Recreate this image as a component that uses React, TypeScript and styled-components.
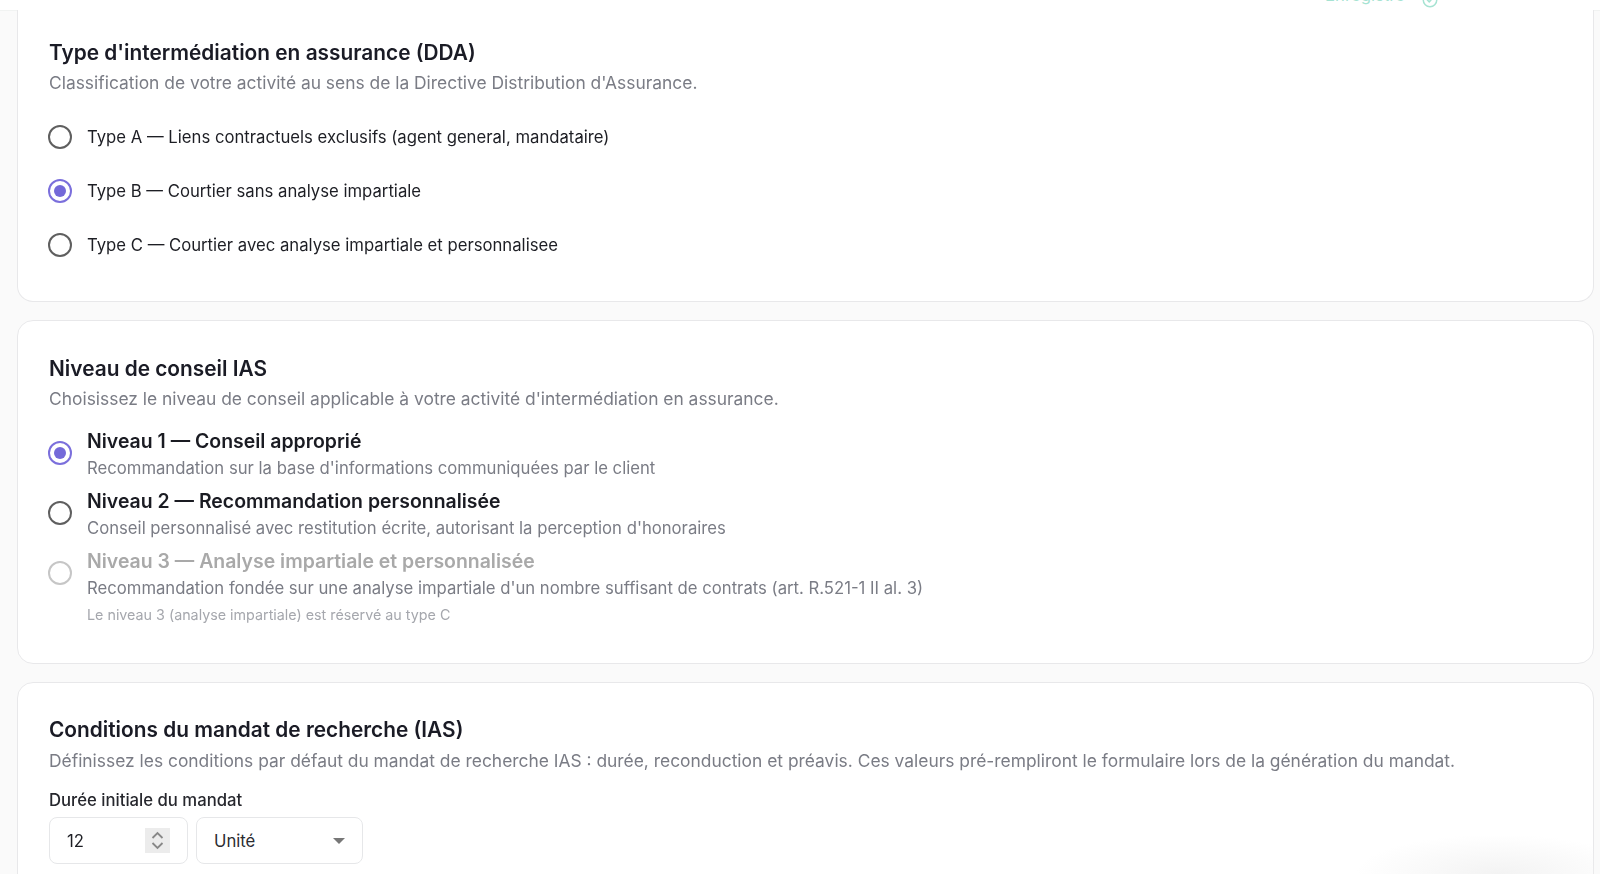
import React from "react";
import styled, { createGlobalStyle } from "styled-components";

const Global = createGlobalStyle`
  html, body { margin: 0; padding: 0; height: 874px; overflow: hidden; background: #fafafa; }
  body { font-family: Inter, "Liberation Sans", sans-serif; color: #1a1a22; -webkit-font-smoothing: antialiased; }
  * { box-sizing: border-box; }
`;

const Page = styled.div`
  position: relative;
  width: 1600px;
  height: 874px;
  overflow: hidden;
  filter: blur(0.3px);
`;

const TopBar = styled.header`
  height: 11px;
  background: #fff;
  border-bottom: 1px solid #f1f3f2;
  display: flex;
  justify-content: flex-end;
  align-items: flex-end;
  gap: 16px;
  padding-right: 161px;
  overflow: hidden;
`;

const Saved = styled.span`
  font-size: 16.7px;
  line-height: 20px;
  color: #a6e3d2;
  margin-bottom: 5px;
  flex: none;
`;

const SavedIcon = styled.svg`
  width: 18px;
  height: 18px;
  margin-bottom: 1px;
  flex: none;
`;

const Stack = styled.main`
  display: flex;
  flex-direction: column;
  gap: 18px;
  padding: 0 6px 0 17px;
  margin-top: -1px;
`;

const Card = styled.section<{ $height: number }>`
  background: #fff;
  border: 1px solid #e8e8ea;
  border-radius: 16px;
  padding: 0 30px 0 31px;
  height: ${(p) => p.$height}px;
  flex: none;
`;

const FirstCard = styled(Card)`
  border-top: none;
  border-top-left-radius: 0;
  border-top-right-radius: 0;
`;

const Title = styled.h2<{ $top: number }>`
  margin: ${(p) => p.$top}px 0 0;
  font-size: 20.85px;
  line-height: 28px;
  font-weight: 600;
  color: #1a1b25;
`;

const Subtitle = styled.p<{ $gap: number }>`
  margin: ${(p) => p.$gap}px 0 0;
  font-size: 17.4px;
  line-height: 26px;
  color: #7a7c85;
`;

const TypeList = styled.div`
  display: flex;
  flex-direction: column;
  gap: 30px;
  margin: 29px 0 0 -1px;
`;

const TypeRow = styled.label`
  display: flex;
  align-items: center;
  gap: 15px;
  height: 24px;
  font-size: 16.7px;
  line-height: 24px;
  color: #1d1e24;
`;

const Radio = styled.span<{ $state?: "on" | "off" | "disabled" }>`
  width: 24px;
  height: 24px;
  flex: none;
  border-radius: 50%;
  display: flex;
  align-items: center;
  justify-content: center;
  background: #fff;
  border: 2px solid
    ${(p) => (p.$state === "on" ? "#7b6fdc" : p.$state === "disabled" ? "#c6c6c6" : "#5f5f5f")};
  &::after {
    content: "";
    width: 12px;
    height: 12px;
    border-radius: 50%;
    background: ${(p) => (p.$state === "on" ? "#7469d9" : "transparent")};
  }
`;

const LevelList = styled.div`
  display: flex;
  flex-direction: column;
  gap: 5px;
  margin: 13px 0 0 -1px;
`;

const LevelRow = styled.label`
  display: flex;
  align-items: center;
  gap: 15px;
`;

const LevelText = styled.div`
  display: flex;
  flex-direction: column;
`;

const LevelTitle = styled.span<{ $disabled?: boolean }>`
  font-size: 19.45px;
  line-height: 32px;
  font-weight: 600;
  color: ${(p) => (p.$disabled ? "#a9a9a9" : "#1a1b22")};
`;

const LevelDesc = styled.span`
  font-size: 16.7px;
  line-height: 23px;
  color: #7a7c85;
`;

const Note = styled.p`
  margin: 5px 0 0 38px;
  font-size: 14.3px;
  line-height: 20px;
  color: #a5a7ad;
`;

const FieldLabel = styled.div`
  margin-top: 14px;
  font-size: 16.7px;
  line-height: 24px;
  font-weight: 500;
  color: #26272d;
`;

const FieldRow = styled.div`
  display: flex;
  gap: 8px;
  margin-top: 5px;
`;

const NumberBox = styled.div`
  width: 139px;
  height: 47px;
  border: 1px solid #e6e7e9;
  border-radius: 8px;
  background: #fff;
  display: flex;
  align-items: center;
  justify-content: space-between;
  padding: 0 17px;
  font-size: 16.7px;
  color: #1d1e24;
`;

const Spinner = styled.svg`
  width: 25px;
  height: 25px;
  flex: none;
`;

const SelectBox = styled.div`
  width: 167px;
  height: 47px;
  border: 1px solid #e6e7e9;
  border-radius: 8px;
  background: #fff;
  display: flex;
  align-items: center;
  justify-content: space-between;
  padding: 0 17px;
  font-size: 16.7px;
  color: #2a2b30;
`;

const Caret = styled.svg`
  width: 12px;
  height: 6px;
  flex: none;
`;

const CornerFade = styled.div`
  position: absolute;
  right: 6px;
  bottom: 0;
  width: 240px;
  height: 40px;
  pointer-events: none;
  background: radial-gradient(ellipse at 60% 100%, rgba(240, 240, 240, 0.8), rgba(255, 255, 255, 0) 70%);
`;

const types = [
  { text: "Type A — Liens contractuels exclusifs (agent general, mandataire)", on: false },
  { text: "Type B — Courtier sans analyse impartiale", on: true },
  { text: "Type C — Courtier avec analyse impartiale et personnalisee", on: false },
];

const levels: { title: string; desc: string; state: "on" | "off" | "disabled" }[] = [
  { title: "Niveau 1 — Conseil approprié", desc: "Recommandation sur la base d'informations communiquées par le client", state: "on" },
  { title: "Niveau 2 — Recommandation personnalisée", desc: "Conseil personnalisé avec restitution écrite, autorisant la perception d'honoraires", state: "off" },
  { title: "Niveau 3 — Analyse impartiale et personnalisée", desc: "Recommandation fondée sur une analyse impartiale d'un nombre suffisant de contrats (art. R.521-1 II al. 3)", state: "disabled" },
];

export default function App() {
  return (
    <Page>
      <Global />
      <TopBar>
        <Saved>Enregistré</Saved>
        <SavedIcon viewBox="0 0 24 24" fill="none" stroke="#a6e3d2" strokeWidth="2" strokeLinecap="round" strokeLinejoin="round">
          <circle cx="12" cy="12" r="9" />
          <path d="m8.5 12 2.5 2.5 4.5-5" />
        </SavedIcon>
      </TopBar>
      <Stack>
        <FirstCard $height={292}>
          <Title $top={29}>Type d'intermédiation en assurance (DDA)</Title>
          <Subtitle $gap={3}>Classification de votre activité au sens de la Directive Distribution d'Assurance.</Subtitle>
          <TypeList>
            {types.map((t) => (
              <TypeRow key={t.text}>
                <Radio $state={t.on ? "on" : "off"} />
                {t.text}
              </TypeRow>
            ))}
          </TypeList>
        </FirstCard>
        <Card $height={344}>
          <Title $top={34}>Niveau de conseil IAS</Title>
          <Subtitle $gap={3}>Choisissez le niveau de conseil applicable à votre activité d'intermédiation en assurance.</Subtitle>
          <LevelList>
            {levels.map((l) => (
              <LevelRow key={l.title}>
                <Radio $state={l.state} />
                <LevelText>
                  <LevelTitle $disabled={l.state === "disabled"}>{l.title}</LevelTitle>
                  <LevelDesc>{l.desc}</LevelDesc>
                </LevelText>
              </LevelRow>
            ))}
          </LevelList>
          <Note>Le niveau 3 (analyse impartiale) est réservé au type C</Note>
        </Card>
        <Card $height={260}>
          <Title $top={33}>Conditions du mandat de recherche (IAS)</Title>
          <Subtitle $gap={4}>Définissez les conditions par défaut du mandat de recherche IAS : durée, reconduction et préavis. Ces valeurs pré-rempliront le formulaire lors de la génération du mandat.</Subtitle>
          <FieldLabel>Durée initiale du mandat</FieldLabel>
          <FieldRow>
            <NumberBox>
              12
              <Spinner viewBox="0 0 25 25" fill="none">
                <rect width="25" height="25" fill="#ececec" />
                <path d="m7.5 10 5-5 5 5M7.5 15l5 5 5-5" stroke="#888" strokeWidth="1.8" />
              </Spinner>
            </NumberBox>
            <SelectBox>
              Unité
              <Caret viewBox="0 0 12 6">
                <path d="M0 0h12L6 6z" fill="#777" />
              </Caret>
            </SelectBox>
          </FieldRow>
        </Card>
      </Stack>
      <CornerFade />
    </Page>
  );
}
